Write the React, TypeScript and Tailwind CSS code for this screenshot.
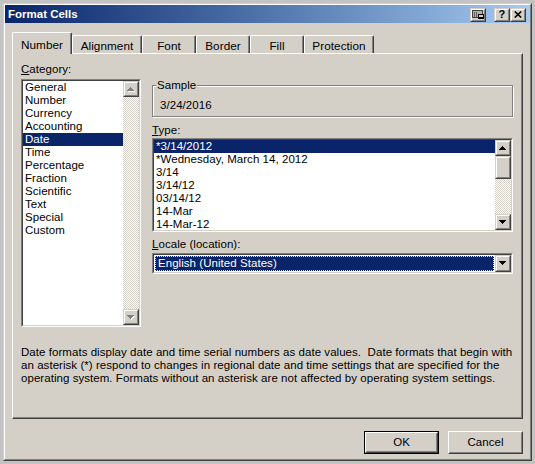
import React from "react";

type Kids = { children?: React.ReactNode; className?: string };

// classic 3D frames
function Raised({ children, className = "" }: Kids) {
  return (
    <div className={`border border-t-[#d4d0c8] border-l-[#d4d0c8] border-r-[#404040] border-b-[#404040] ${className}`}>
      <div className="flex h-full w-full items-center justify-center border border-t-white border-l-white border-r-[#808080] border-b-[#808080] bg-[#d4d0c8]">
        {children}
      </div>
    </div>
  );
}

function Sunken({ children, className = "" }: Kids) {
  return (
    <div className={`border border-t-[#808080] border-l-[#808080] border-r-white border-b-white ${className}`}>
      <div className="flex h-full w-full border border-t-[#404040] border-l-[#404040] border-r-[#d4d0c8] border-b-[#d4d0c8] bg-white">
        {children}
      </div>
    </div>
  );
}

function Arrow({ up = false, disabled = false }: { up?: boolean; disabled?: boolean }) {
  const rows = up
    ? [[3, 1], [2, 3], [1, 5], [0, 7]]
    : [[0, 7], [1, 5], [2, 3], [3, 1]];
  return (
    <svg width="8" height="5" shapeRendering="crispEdges">
      {disabled &&
        rows.map(([x, w], i) => (
          <rect key={"s" + i} x={x + 1} y={i + 1} width={w} height={1} fill="#ffffff" />
        ))}
      {rows.map(([x, w], i) => (
        <rect key={i} x={x} y={i} width={w} height={1} fill={disabled ? "#808080" : "#000000"} />
      ))}
    </svg>
  );
}

function Track({ className = "" }: { className?: string }) {
  return (
    <div
      className={`bg-[image:repeating-conic-gradient(#ffffff_0_25%,#d4d0c8_0_50%)] bg-[length:2px_2px] ${className}`}
    />
  );
}

function Item({ label, selected = false }: { label: string; selected?: boolean }) {
  return (
    <div
      className={`h-[13px] whitespace-nowrap pl-[2px] leading-[13px] ${
        selected ? "bg-[#0a246a] text-white" : "text-black"
      }`}
    >
      {label}
    </div>
  );
}

function PushButton({ label, dflt = false }: { label: string; dflt?: boolean }) {
  return (
    <div className={`h-[23px] w-[75px] ${dflt ? "border border-black" : ""}`}>
      <div className="h-full w-full border border-t-white border-l-white border-r-[#404040] border-b-[#404040]">
        <div className="flex h-full w-full items-center justify-center border border-t-[#d4d0c8] border-l-[#d4d0c8] border-r-[#808080] border-b-[#808080]">
          {label}
        </div>
      </div>
    </div>
  );
}

function WinIcon() {
  return (
    <svg width="12" height="9" shapeRendering="crispEdges">
      <rect x="0.5" y="0.5" width="10" height="7" fill="#b0b0b0" stroke="#404040" />
      <rect x="2" y="2" width="1" height="5" fill="#606060" />
      <rect x="4" y="2" width="1" height="5" fill="#606060" />
      <rect x="6" y="4" width="6" height="5" fill="#000000" />
      <rect x="7" y="5" width="4" height="2" fill="#d4d0c8" />
    </svg>
  );
}

function CloseIcon() {
  return (
    <svg width="8" height="7">
      <path d="M0.8 0.5 L7.2 6.5 M7.2 0.5 L0.8 6.5" stroke="#000" strokeWidth="1.6" />
    </svg>
  );
}

const categories = [
  "General",
  "Number",
  "Currency",
  "Accounting",
  "Date",
  "Time",
  "Percentage",
  "Fraction",
  "Scientific",
  "Text",
  "Special",
  "Custom",
];

const types = [
  "*3/14/2012",
  "*Wednesday, March 14, 2012",
  "3/14",
  "3/14/12",
  "03/14/12",
  "14-Mar",
  "14-Mar-12",
];

const tabs = [
  { label: "Alignment", w: "w-[70px]" },
  { label: "Font", w: "w-[54px]" },
  { label: "Border", w: "w-[54px]" },
  { label: "Fill", w: "w-[54px]" },
  { label: "Protection", w: "w-[70px]" },
];

export default function App() {
  return (
    <div className="h-[464px] w-[535px] bg-[#c3c3c3] pl-[3px] pt-[3px] font-['Liberation_Sans',Arial,sans-serif] text-[11.5px] leading-[13px] tracking-[0.05px] text-black">
      <div className="h-[458px] w-[529px] border border-t-[#d4d0c8] border-l-[#d4d0c8] border-r-[#404040] border-b-[#404040]">
        <div className="flex h-full w-full flex-col border border-t-white border-l-white border-r-[#808080] border-b-[#808080] bg-[#d4d0c8]">
          {/* title bar */}
          <div className="flex h-[18px] shrink-0 items-center justify-between bg-linear-to-r from-[#0a246a] to-[#a6caf0] pl-[3px] pr-[4px]">
            <span className="text-[11.5px] font-bold tracking-normal text-white">Format Cells</span>
            <div className="flex items-center pt-[1px]">
              <Raised className="h-[14px] w-[16px]">
                <WinIcon />
              </Raised>
              <Raised className="ml-[8px] h-[14px] w-[16px]">
                <span className="text-[11px] font-bold leading-none">?</span>
              </Raised>
              <Raised className="h-[14px] w-[16px]">
                <CloseIcon />
              </Raised>
            </div>
          </div>

          {/* tabs */}
          <div className="ml-[7px] mt-[9px] flex h-[21px] items-end text-[11.75px]">
            <div className="relative z-10 -mb-[1px] h-[22px] w-[60px] rounded-t-[2px] border-l border-t border-r border-l-white border-t-white border-r-[#404040] bg-[#d4d0c8] pt-[5px] text-center shadow-[inset_-1px_0_0_#808080]">
              Number
            </div>
            {tabs.map((t) => (
              <div
                key={t.label}
                className={`h-[18px] ${t.w} rounded-t-[2px] border-l border-t border-r border-l-white border-t-white border-r-[#404040] pt-[3px] text-center shadow-[inset_-1px_0_0_#808080]`}
              >
                {t.label}
              </div>
            ))}
          </div>

          {/* panel */}
          <div className="ml-[7px] h-[366px] w-[511px] border border-t-white border-l-white border-r-[#404040] border-b-[#404040] pl-[8px] pt-[9px] shadow-[inset_-1px_-1px_0_#808080]">
            <div className="flex gap-[11px]">
              {/* category */}
              <div className="flex w-[120px] flex-col">
                <div className="h-[13px]">
                  <span className="underline">C</span>ategory:
                </div>
                <Sunken className="mt-[3px] h-[248px] w-[120px]">
                  <div className="flex-1">
                    {categories.map((c) => (
                      <Item key={c} label={c} selected={c === "Date"} />
                    ))}
                  </div>
                  <div className="flex w-[16px] flex-col">
                    <Raised className="h-[16px] w-[16px]">
                      <Arrow up disabled />
                    </Raised>
                    <Track className="flex-1" />
                    <Raised className="h-[16px] w-[16px]">
                      <Arrow disabled />
                    </Raised>
                  </div>
                </Sunken>
              </div>

              {/* right side */}
              <div className="flex w-[361px] flex-col">
                <div className="relative mt-[22px] h-[32px] border border-[#808080] pl-[7px] pt-[13px] shadow-[1px_1px_0_#ffffff,inset_1px_1px_0_#ffffff]">
                  <span className="absolute -top-[7px] left-[3px] bg-[#d4d0c8] px-[1px]">Sample</span>
                  3/24/2016
                </div>

                <div className="mt-[7px] h-[13px]">
                  <span className="underline">T</span>ype:
                </div>
                <Sunken className="mt-[1px] h-[94px] w-[361px]">
                  <div className="flex-1 overflow-hidden">
                    {types.map((t, i) => (
                      <Item key={t} label={t} selected={i === 0} />
                    ))}
                  </div>
                  <div className="flex w-[16px] flex-col">
                    <Raised className="h-[16px] w-[16px]">
                      <Arrow up />
                    </Raised>
                    <Raised className="h-[23px] w-[16px]" />
                    <Track className="flex-1" />
                    <Raised className="h-[16px] w-[16px]">
                      <Arrow />
                    </Raised>
                  </div>
                </Sunken>

                <div className="mt-[6px] h-[13px]">
                  <span className="underline">L</span>ocale (location):
                </div>
                <Sunken className="mt-[2px] h-[21px] w-[361px]">
                  <div className="flex-1 p-[1px]">
                    <div className="flex h-full items-center border border-dotted border-[#e6df8c] bg-[#0a246a] pl-[2px] text-white">
                      English (United States)
                    </div>
                  </div>
                  <Raised className="h-full w-[16px]">
                    <Arrow />
                  </Raised>
                </Sunken>
              </div>
            </div>

            <p className="mt-[19px] whitespace-pre">
              {"Date formats display date and time serial numbers as date values.  Date formats that begin with"}
              <br />
              {"an asterisk (*) respond to changes in regional date and time settings that are specified for the"}
              <br />
              {"operating system. Formats without an asterisk are not affected by operating system settings."}
            </p>
          </div>

          {/* buttons */}
          <div className="mr-[7px] mt-[12px] flex justify-end gap-[9px]">
            <PushButton label="OK" dflt />
            <PushButton label="Cancel" />
          </div>
        </div>
      </div>
    </div>
  );
}
